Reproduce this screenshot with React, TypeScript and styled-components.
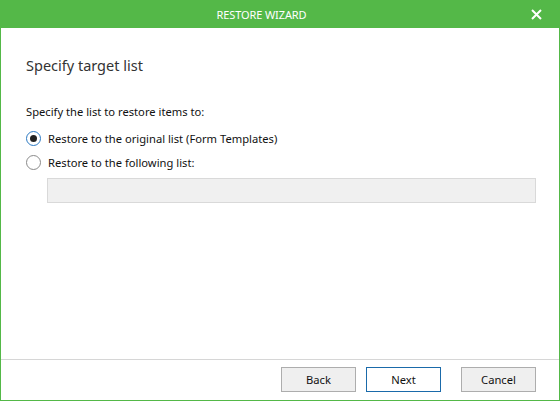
import React from "react";
import styled, { createGlobalStyle } from "styled-components";

const Global = createGlobalStyle`
  html, body { margin: 0; padding: 0; background: #fff; }
  body { font-family: "Noto Sans", "Open Sans", sans-serif; }
  #root { width: 560px; height: 401px; }
`;

const Window = styled.div`
  width: 560px;
  height: 401px;
  box-sizing: border-box;
  display: flex;
  flex-direction: column;
  border: 1px solid #54b848;
  border-top: none;
  background: #fff;
`;

const TitleBar = styled.div`
  height: 28px;
  margin: 0 -1px;
  background: #54b848;
  display: flex;
  align-items: center;
  position: relative;
`;

const Title = styled.div`
  flex: 1;
  text-align: center;
  padding-right: 37px;
  color: #fff;
  font-size: 11px;
  letter-spacing: -0.1px;
`;

const Close = styled.button`
  position: absolute;
  right: 17px;
  top: 7px;
  width: 14px;
  height: 14px;
  padding: 0;
  border: none;
  background: transparent;
  display: flex;
  align-items: center;
  justify-content: center;
`;

const Body = styled.div`
  flex: 1;
  padding: 27px 23px 0 25px;
  display: flex;
  flex-direction: column;
`;

const Heading = styled.h1`
  margin: 0;
  font-size: 14.5px;
  font-weight: 400;
  color: #333;
  line-height: 20px;
`;

const Prompt = styled.div`
  margin-top: 29px;
  font-size: 11.2px;
  color: #111;
  line-height: 16px;
`;

const RadioRow = styled.label<{ $gap: number }>`
  display: flex;
  align-items: center;
  gap: 7px;
  height: 16px;
  margin-top: ${(p) => p.$gap}px;
  font-size: 11.2px;
  color: #111;
`;

const RadioCircle = styled.span<{ $checked: boolean }>`
  width: 13px;
  height: 13px;
  border-radius: 50%;
  border: 1px solid ${(p) => (p.$checked ? "#2b79c2" : "#8a8a8a")};
  background: #fff;
  display: flex;
  align-items: center;
  justify-content: center;
  flex-shrink: 0;
  &::after {
    content: "";
    display: ${(p) => (p.$checked ? "block" : "none")};
    width: 7px;
    height: 7px;
    border-radius: 50%;
    background: #222;
  }
`;

const ListInput = styled.div`
  margin: 8px 0 0 21px;
  height: 23px;
  border: 1px solid #d9d9d9;
  background: #f0f0f0;
`;

const Footer = styled.div`
  height: 41px;
  border-top: 1px solid #d6d6d6;
  display: flex;
  align-items: flex-start;
  justify-content: flex-end;
  padding: 7px 23px 0 0;
  box-sizing: border-box;
`;

const Button = styled.button<{ $primary?: boolean; $space: number }>`
  width: 75px;
  height: 25px;
  margin-left: ${(p) => p.$space}px;
  box-sizing: border-box;
  border: 1px solid ${(p) => (p.$primary ? "#1a6aaa" : "#adadad")};
  background: ${(p) => (p.$primary ? "#fff" : "#efefef")};
  font-family: inherit;
  font-size: 11.2px;
  color: #111;
  padding: 0;
`;

export default function App() {
  return (
    <>
      <Global />
      <Window>
        <TitleBar>
          <Title>RESTORE WIZARD</Title>
          <Close aria-label="Close">
            <svg width="11" height="11" viewBox="0 0 11 11">
              <path d="M1 1 L10 10 M10 1 L1 10" stroke="#fff" strokeWidth="2" />
            </svg>
          </Close>
        </TitleBar>
        <Body>
          <Heading>Specify target list</Heading>
          <Prompt>Specify the list to restore items to:</Prompt>
          <RadioRow $gap={10}>
            <RadioCircle $checked />
            Restore to the original list (Form Templates)
          </RadioRow>
          <RadioRow $gap={8}>
            <RadioCircle $checked={false} />
            Restore to the following list:
          </RadioRow>
          <ListInput />
        </Body>
        <Footer>
          <Button $space={0}>Back</Button>
          <Button $primary $space={10}>Next</Button>
          <Button $space={20}>Cancel</Button>
        </Footer>
      </Window>
    </>
  );
}
